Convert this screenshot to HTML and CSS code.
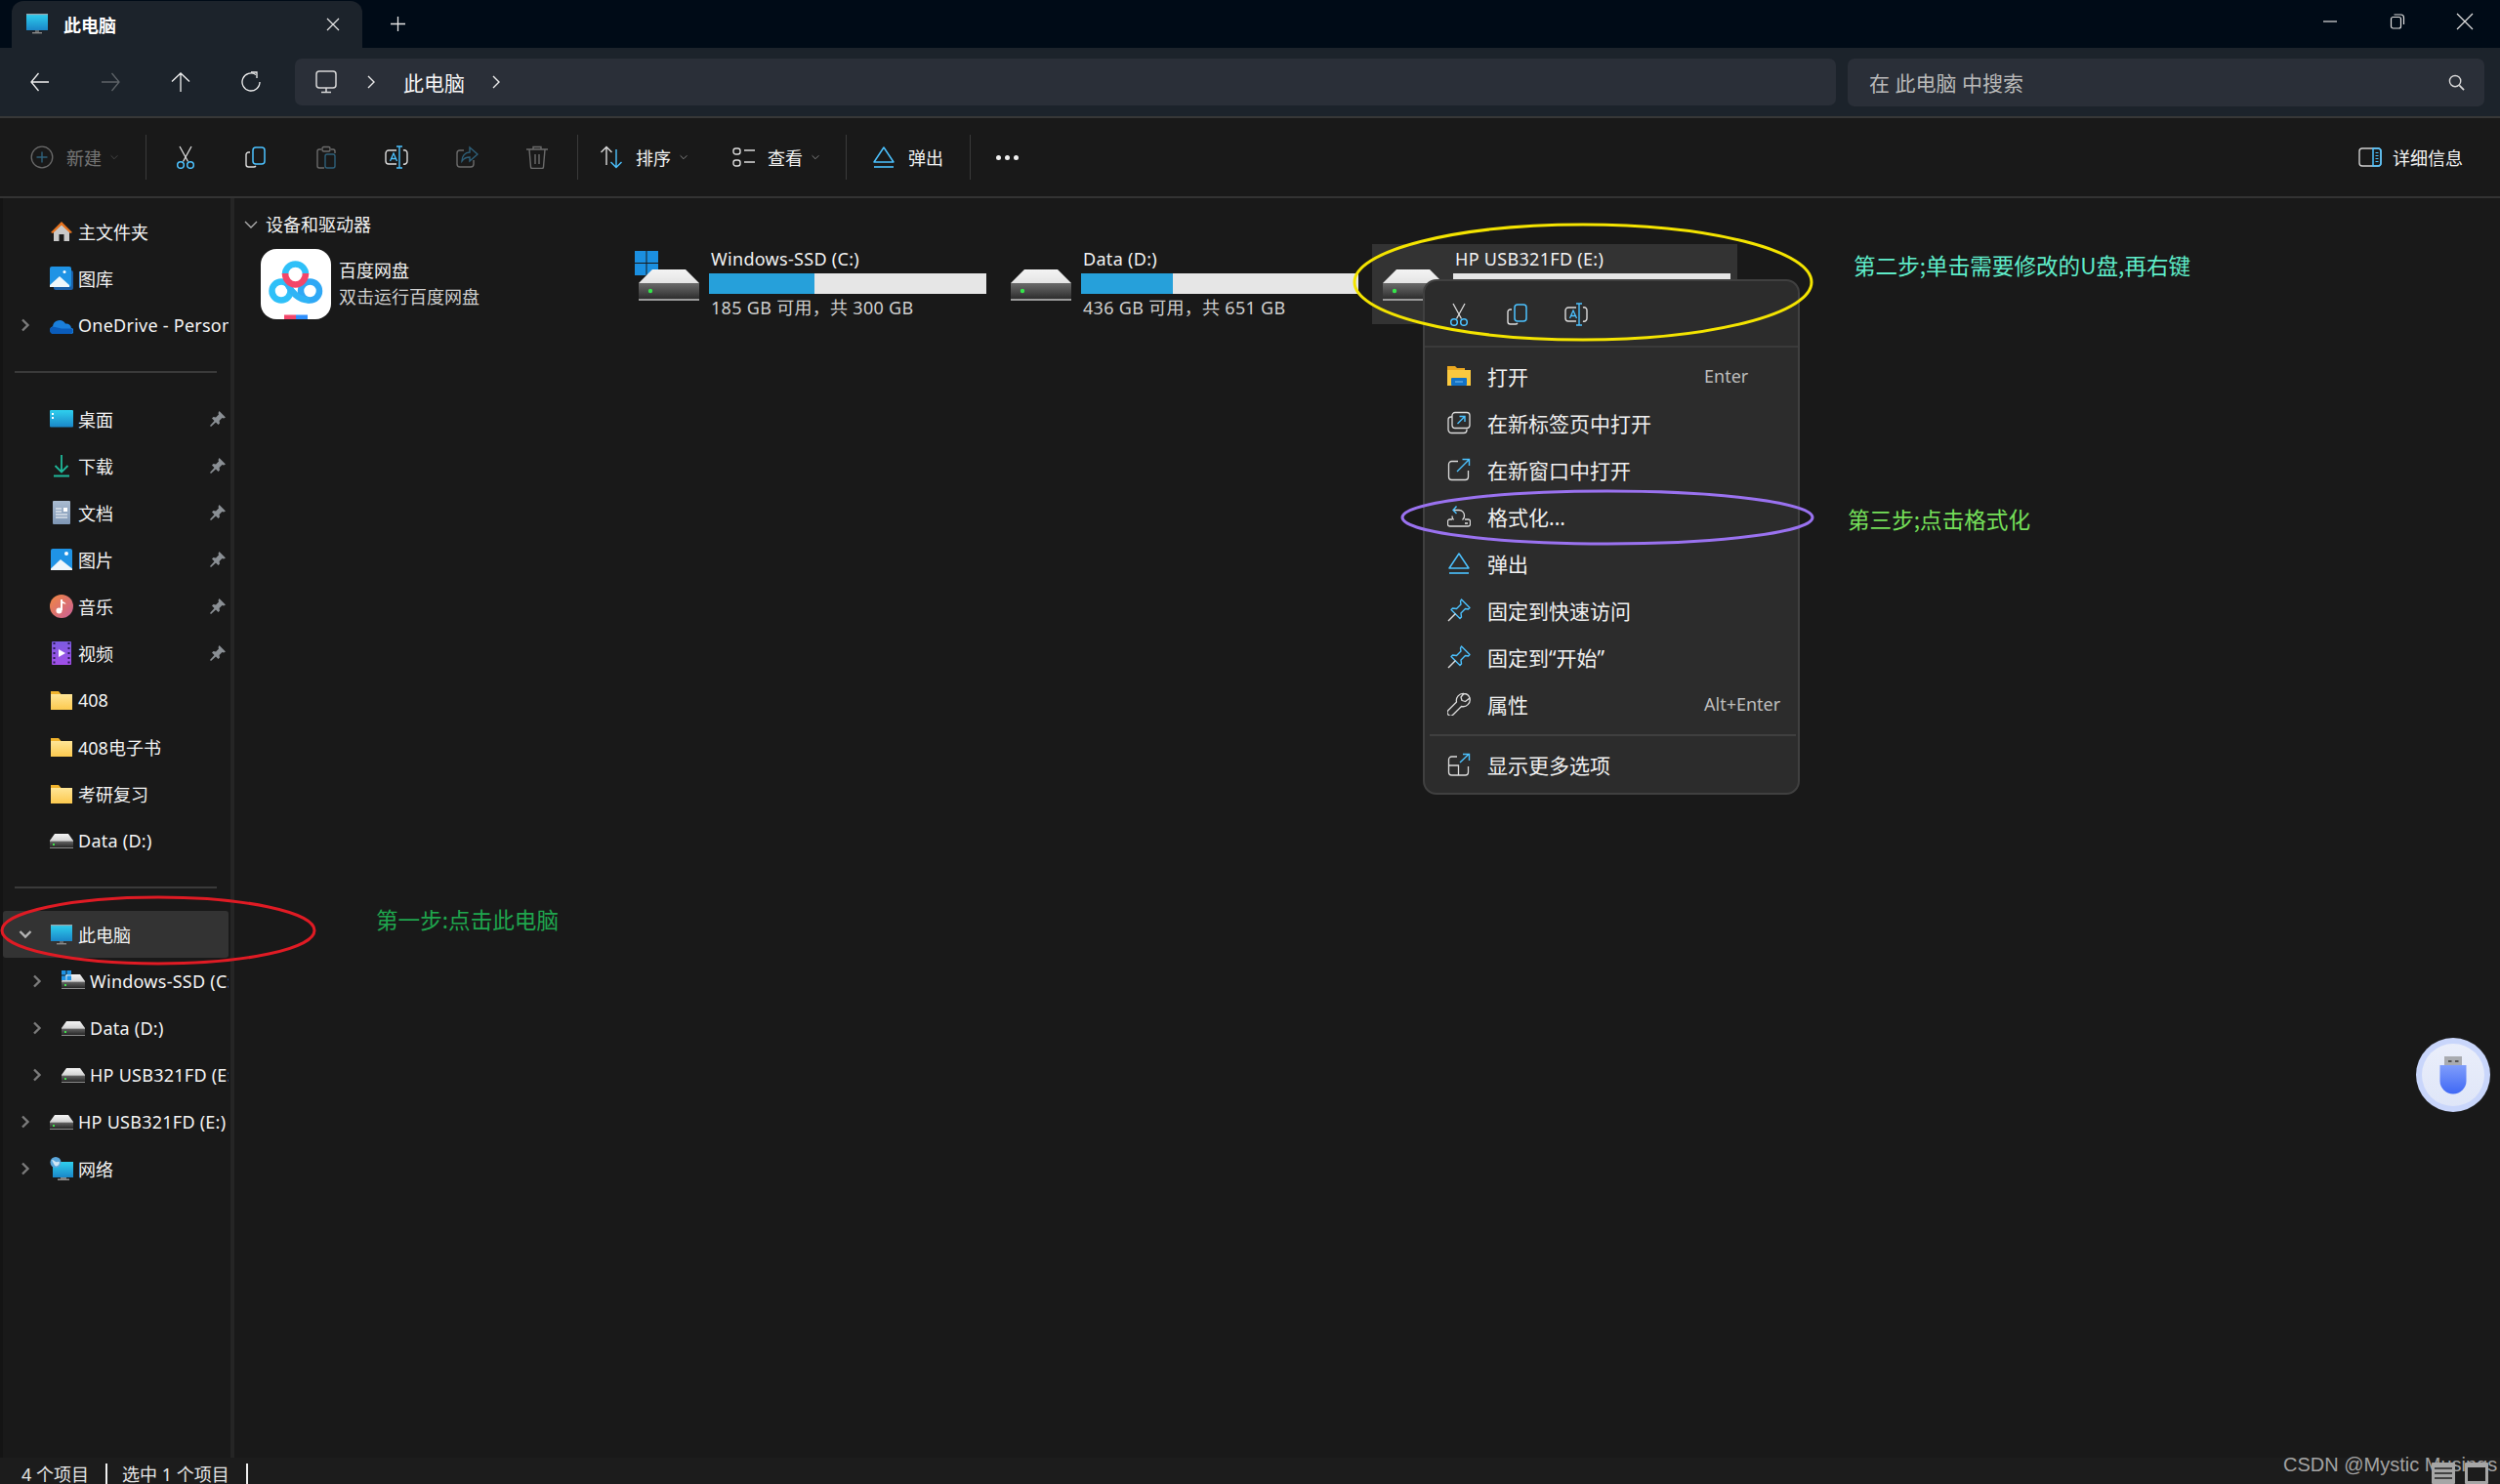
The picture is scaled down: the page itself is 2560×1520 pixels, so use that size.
FILE: index.html
```html
<!DOCTYPE html>
<html lang="zh-CN">
<head>
<meta charset="utf-8">
<title>此电脑</title>
<link rel="stylesheet" href="styles.css">
</head>
<body>
<svg class="defs" width="0" height="0" aria-hidden="true">
  <defs>
    <linearGradient id="gCyan" x1="0" y1="0" x2="0" y2="1"><stop offset="0" stop-color="#2fd0ee"/><stop offset="1" stop-color="#1a86c8"/></linearGradient>
    <linearGradient id="gFolder" x1="0" y1="0" x2="0" y2="1"><stop offset="0" stop-color="#ffe9a0"/><stop offset="1" stop-color="#fcc94e"/></linearGradient>
    <linearGradient id="gDrive" x1="0" y1="0" x2="0" y2="1"><stop offset="0" stop-color="#6b6b6b"/><stop offset="1" stop-color="#262626"/></linearGradient>
    <linearGradient id="gTop" x1="0" y1="0" x2="0" y2="1"><stop offset="0" stop-color="#f4f4f4"/><stop offset="1" stop-color="#d0d0d0"/></linearGradient>
    <linearGradient id="gPurple" x1="0" y1="0" x2="0" y2="1"><stop offset="0" stop-color="#7b5be0"/><stop offset="1" stop-color="#a24fe8"/></linearGradient>
    <linearGradient id="gMusic" x1="0" y1="0" x2="1" y2="1"><stop offset="0" stop-color="#f2873f"/><stop offset="1" stop-color="#c9609a"/></linearGradient>
    <linearGradient id="gDoc" x1="0" y1="0" x2="0" y2="1"><stop offset="0" stop-color="#a9bbd0"/><stop offset="1" stop-color="#7f97b5"/></linearGradient>
    <linearGradient id="gUsb" x1="0" y1="0" x2="0" y2="1"><stop offset="0" stop-color="#7f9dfb"/><stop offset="1" stop-color="#3f68f5"/></linearGradient>
    <linearGradient id="gUsbBg" x1="0" y1="0" x2="0" y2="1"><stop offset="0" stop-color="#eaeefa"/><stop offset="1" stop-color="#dfe6f8"/></linearGradient>

    <symbol id="i-pc" viewBox="0 0 24 24"><rect x="1" y="2" width="22" height="17" fill="url(#gCyan)"/><rect x="1" y="2" width="22" height="1.2" fill="#9aa7ad"/><rect x="10" y="19" width="4" height="2" fill="#666"/><rect x="7" y="21" width="10" height="1.4" fill="#8a8a8a"/></symbol>
    <symbol id="i-home" viewBox="0 0 24 24"><path d="M4 12 12 5l8 7v10h-5.500v-7h-5v7H4z" fill="#c9c9c9"/><path d="M1 13 12 2l11 11-2 1L12 5.500 3 14z" fill="#e8741f"/></symbol>
    <symbol id="i-gallery" viewBox="0 0 24 24"><rect x="4" y="4" width="20" height="20" rx="2" fill="#1b5fa8"/><rect x="0" y="0" width="22" height="21" rx="2" fill="#1f93e5"/><path d="M0 19 10 10l10 9v2H0z" fill="#eef6fb"/><circle cx="15" cy="5.500" r="1.500" fill="#fff"/></symbol>
    <symbol id="i-cloud" viewBox="0 0 24 24"><path d="M4 21a4 4 0 0 1-1-7.800 7 7 0 0 1 13-2.700 5 5 0 0 1 6 4.500 3 3 0 0 1-1 6z" fill="#1a7fdc"/><path d="M4 21a3.800 3.800 0 0 1-1-7.500l9 2 10 0a3 3 0 0 1-1 5.500z" fill="#0a5cbb"/></symbol>
    <symbol id="i-desktop" viewBox="0 0 24 24"><rect x="0" y="3" width="24" height="17.500" rx="1" fill="url(#gCyan)"/><rect x="2" y="6" width="2" height="2" fill="#fff"/><rect x="2" y="10" width="2" height="2" fill="#fff"/></symbol>
    <symbol id="i-down" viewBox="0 0 24 24"><path d="M12 1v17M5.500 12 12 18.500 18.500 12" fill="none" stroke="#1fb89a" stroke-width="1.800"/><path d="M4 22.500h16" stroke="#1fb89a" stroke-width="2"/></symbol>
    <symbol id="i-doc" viewBox="0 0 24 24"><rect x="3" y="0" width="18" height="24" rx="1" fill="url(#gDoc)"/><path d="M6 8h6M6 11h6M6 14h12M6 17h12" stroke="#fff" stroke-width="1"/><rect x="14" y="7" width="4" height="4" fill="#fff"/></symbol>
    <symbol id="i-pic" viewBox="0 0 24 24"><rect x="1" y="1" width="22" height="22" rx="2" fill="#1f93e5"/><path d="M1 21.500 11 12l12 9.500V23H1z" fill="#eef6fb"/><circle cx="17" cy="6" r="2" fill="#fff"/></symbol>
    <symbol id="i-music" viewBox="0 0 24 24"><circle cx="12" cy="12" r="12" fill="url(#gMusic)"/><path d="M12 5v11" stroke="#fff" stroke-width="2"/><circle cx="9.500" cy="16.500" r="3" fill="#fff"/><path d="M12 5c1 3 4 2.500 4.500 5-1.500-1-3-1-4.500-1z" fill="#fff"/></symbol>
    <symbol id="i-video" viewBox="0 0 24 24"><rect x="2" y="0" width="20" height="24" rx="1" fill="url(#gPurple)"/><path d="M9 8l7 4-7 4z" fill="#fff"/><path d="M3.500 2h2M3.500 7h2M3.500 12h2M3.500 17h2M3.500 21.500h2M18.500 2h2M18.500 7h2M18.500 12h2M18.500 17h2M18.500 21.500h2" stroke="#2a1a55" stroke-width="2"/></symbol>
    <symbol id="i-folder" viewBox="0 0 24 24"><path d="M1 4h8l2 2h12v16H1z" fill="url(#gFolder)"/><path d="M1 3h8l2.500 3H1z" fill="#f1b32c"/></symbol>
    <symbol id="i-drive" viewBox="0 0 24 24"><path d="M5 5h14l5 7v1H0v-1z" fill="url(#gTop)"/><rect x="0" y="12" width="24" height="7" fill="url(#gDrive)"/><rect x="0" y="12" width="24" height="1" fill="#aaa"/><rect x="0" y="19" width="24" height="1" fill="#8a8a8a"/><rect x="3" y="15" width="2" height="2" fill="#3fe04a"/></symbol>
    <symbol id="i-net" viewBox="0 0 24 24"><rect x="3" y="5" width="21" height="16" fill="url(#gCyan)"/><rect x="11" y="21" width="6" height="1.500" fill="#888"/><rect x="8" y="22.500" width="12" height="1.300" fill="#aaa"/><circle cx="6" cy="5.500" r="5.500" fill="#5ba7dc"/><path d="M2 3c3 0 3 3 6 2s2 3 0 4-3 0-4-2" fill="#cfe6f5"/></symbol>
    <symbol id="i-pin" viewBox="0 0 16 16"><path d="M9.500 0 16 6.500l-2 1-1.500-.5-3 3 .5 2.500-1.500 1.500-2.500-2.500L1 16l-1-1 4.500-5L2 7.500 3.500 6 6 6.500l3-3-.5-1.500z" fill="#8a8f94"/></symbol>
    <symbol id="i-chev" viewBox="0 0 10 14"><path d="M2 1.500 7.500 7 2 12.500" fill="none" stroke="#7b7b7b" stroke-width="2.400"/></symbol>
    <symbol id="i-chevd" viewBox="0 0 14 10"><path d="M1.500 2 7 7.500 12.500 2" fill="none" stroke="#b5b5b5" stroke-width="2.400"/></symbol>
    <symbol id="i-thin-d" viewBox="0 0 14 10"><path d="M1 2 7 8 13 2" fill="none" stroke="#b0b0b0" stroke-width="1.200"/></symbol>

    <symbol id="t-cut" viewBox="0 0 24 24"><path d="M6 1l8.500 15.500M18 1 9.500 16.500" fill="none" stroke="#dcdcdc" stroke-width="1.300"/><circle cx="7" cy="20" r="3.300" fill="none" stroke="#4cc2ff" stroke-width="1.500"/><circle cx="17" cy="20" r="3.300" fill="none" stroke="#4cc2ff" stroke-width="1.500"/></symbol>
    <symbol id="t-copy" viewBox="0 0 24 24"><path d="M6 7H4.500A2.500 2.500 0 0 0 2 9.500v10A2.500 2.500 0 0 0 4.500 22H10a2.500 2.500 0 0 0 2-1" fill="none" stroke="#dcdcdc" stroke-width="1.400"/><rect x="9" y="2" width="12" height="17" rx="3" fill="none" stroke="#4cc2ff" stroke-width="1.500"/></symbol>
    <symbol id="t-paste" viewBox="0 0 24 24"><path d="M7 4H5a2 2 0 0 0-2 2v15a2 2 0 0 0 2 2h5M17 4h2a2 2 0 0 1 2 2v2" fill="none" stroke="#dcdcdc" stroke-width="1.400"/><rect x="8" y="1.500" width="8" height="4.500" rx="1.500" fill="none" stroke="#dcdcdc" stroke-width="1.400"/><rect x="11" y="9" width="10" height="14" rx="2" fill="none" stroke="#4cc2ff" stroke-width="1.400"/></symbol>
    <symbol id="t-ren" viewBox="0 0 24 24"><path d="M12 5H4a3 3 0 0 0-3 3v8a3 3 0 0 0 3 3h8M19 5a3 3 0 0 1 4 3v8a3 3 0 0 1-4 3" fill="none" stroke="#dcdcdc" stroke-width="1.400"/><path d="M12 1h6M15 1v22M12 23h6" fill="none" stroke="#4cc2ff" stroke-width="1.400"/><path d="M5.500 16 9 8l3.500 8M6.800 13.500h4.500" fill="none" stroke="#4cc2ff" stroke-width="1.300"/></symbol>
    <symbol id="t-share" viewBox="0 0 24 24"><path d="M9 5H5a3 3 0 0 0-3 3v11a3 3 0 0 0 3 3h11a3 3 0 0 0 3-3v-4" fill="none" stroke="#dcdcdc" stroke-width="1.400"/><path d="M15 2l8 7-8 7v-4c-4 0-6 1-8 4 0-5 3-9 8-9z" fill="none" stroke="#4cc2ff" stroke-width="1.400"/></symbol>
    <symbol id="t-del" viewBox="0 0 24 24"><path d="M1 4h22M8 4V1.500h8V4M4 4l1.500 18a1.500 1.500 0 0 0 1.500 1.500h10a1.500 1.500 0 0 0 1.500-1.500L20 4" fill="none" stroke="#dcdcdc" stroke-width="1.400"/><path d="M10 9v10M14 9v10" stroke="#dcdcdc" stroke-width="1.400"/></symbol>
    <symbol id="t-new" viewBox="0 0 24 24"><circle cx="12" cy="12" r="10.800" fill="none" stroke="#dcdcdc" stroke-width="1.300"/><path d="M12 6.500v11M6.500 12h11" stroke="#4cc2ff" stroke-width="1.400"/></symbol>
    <symbol id="t-sort" viewBox="0 0 24 24"><path d="M1.500 7 7 1.500 12.500 7M7 1.500V20" fill="none" stroke="#dcdcdc" stroke-width="1.400"/><path d="M11.500 17 17 22.500 22.500 17M17 4v18" fill="none" stroke="#4cc2ff" stroke-width="1.400"/></symbol>
    <symbol id="t-view" viewBox="0 0 24 24"><rect x="1" y="3" width="7" height="6" rx="2.500" fill="none" stroke="#dcdcdc" stroke-width="1.400"/><rect x="1" y="15" width="7" height="6" rx="2.500" fill="none" stroke="#dcdcdc" stroke-width="1.400"/><path d="M12 5h11M12 17h11" stroke="#dcdcdc" stroke-width="1.400"/></symbol>
    <symbol id="t-eject" viewBox="0 0 24 24"><path d="M12 2 22 17H2z" fill="none" stroke="#4cc2ff" stroke-width="1.500" stroke-linejoin="round"/><path d="M2 22h20" stroke="#4cc2ff" stroke-width="1.600"/></symbol>
    <symbol id="t-detail" viewBox="0 0 24 24"><rect x="1" y="3" width="22" height="18" rx="3" fill="none" stroke="#cfcfcf" stroke-width="1.400"/><path d="M15 3h5a3 3 0 0 1 3 3v12a3 3 0 0 1-3 3h-5z" fill="none" stroke="#4cc2ff" stroke-width="1.500"/><path d="M17.500 7.500h3M17.500 10.500h3M17.500 13.500h3M17.500 16.500h3" stroke="#4cc2ff" stroke-width="1.200"/></symbol>

    <symbol id="m-open" viewBox="0 0 24 24"><path d="M0 2h8l2 2h8v18H0z" fill="#eba820"/><rect x="0" y="6" width="24" height="16" fill="#fbc93f"/><rect x="4" y="14" width="16" height="8" rx="1" fill="#1473c6"/><path d="M8 18h8" stroke="#7fc4f5" stroke-width="1"/></symbol>
    <symbol id="m-tab" viewBox="0 0 24 24"><rect x="5" y="1.500" width="18" height="16" rx="3" fill="none" stroke="#dcdcdc" stroke-width="1.300"/><path d="M5 6H4a3 3 0 0 0-3 3v10a3.500 3.500 0 0 0 3.500 3.500H17a3 3 0 0 0 3-3v-1" fill="none" stroke="#dcdcdc" stroke-width="1.300"/><path d="M10.500 13 18 5.500M12.500 5.500H18V11" fill="none" stroke="#4cc2ff" stroke-width="1.400"/></symbol>
    <symbol id="m-win" viewBox="0 0 24 24"><path d="M11 3.500H4.500A3 3 0 0 0 1.500 6.500v13a3 3 0 0 0 3 3h14a3 3 0 0 0 3-3V13" fill="none" stroke="#dcdcdc" stroke-width="1.300"/><path d="M10 14 22 2M15.500 1.500H22.500V8" fill="none" stroke="#4cc2ff" stroke-width="1.400"/></symbol>
    <symbol id="m-format" viewBox="0 0 24 24"><path d="M5 15H2.500a2 2 0 0 0-2 2v3a2 2 0 0 0 2 2h19a2 2 0 0 0 2-2v-3a2 2 0 0 0-2-2H18" fill="none" stroke="#dcdcdc" stroke-width="1.300"/><path d="M18 19h3" stroke="#dcdcdc" stroke-width="1.600"/><path d="M7 5.500h5a5.500 5.500 0 0 1 5.500 5.500 5 5 0 0 1-2 4.500" fill="none" stroke="#dcdcdc" stroke-width="1.300"/><path d="M6.500 15.500a5.500 5.500 0 0 1-1.500-4" fill="none" stroke="#dcdcdc" stroke-width="1.300"/><path d="M9.500 1.500 6 5.500 9.500 9" fill="none" stroke="#4cc2ff" stroke-width="1.400"/></symbol>
    <symbol id="m-pin" viewBox="0 0 24 24"><path d="M14.500 1 23 9.500l-1.500 1.500-3-.5-4.500 4.500.5 4-1.500 1.500L4 11.500 5.500 10l4 .5L14 6l-.5-3z" fill="none" stroke="#4cc2ff" stroke-width="1.400" stroke-linejoin="round"/><path d="M8.500 15.500 1 23" stroke="#dcdcdc" stroke-width="1.400"/></symbol>
    <symbol id="m-wrench" viewBox="0 0 24 24"><path d="M17 1.500a6.500 6.500 0 0 1 6 4.500l-4.500 3.500-3.500-1-1-3.500zM23 6a7 7 0 0 1-8.500 8.500L6 23a3.200 3.200 0 0 1-5-4.500L9.500 10A7 7 0 0 1 17 1.500" fill="none" stroke="#dcdcdc" stroke-width="1.300" stroke-linejoin="round"/></symbol>
    <symbol id="m-more" viewBox="0 0 24 24"><path d="M10 4H4.500a3 3 0 0 0-3 3v13a3 3 0 0 0 3 3h14a3 3 0 0 0 3-3V14" fill="none" stroke="#dcdcdc" stroke-width="1.300"/><path d="M1.500 13h10v10" fill="none" stroke="#dcdcdc" stroke-width="1.300"/><path d="M13 10 22 1.500M16 1.500h6.500V8" fill="none" stroke="#4cc2ff" stroke-width="1.400"/></symbol>
  </defs>
</svg>

<div class="window">
  <header class="titlebar">
    <div class="tab">
      <svg class="ico-22"><use href="#i-pc"/></svg>
      <span class="tab-title">此电脑</span>
      <svg class="tab-close" viewBox="0 0 14 14"><path d="M1 1l12 12M13 1 1 13" stroke="#e6e6e6" stroke-width="1.200"/></svg>
    </div>
    <svg class="tab-plus" viewBox="0 0 14 14"><path d="M7 0v14M0 7h14" stroke="#e6e6e6" stroke-width="1.200"/></svg>
    <div class="winctl">
      <svg class="ctl" viewBox="0 0 16 16"><path d="M1 8h14" stroke="#e0e0e0" stroke-width="1.200"/></svg>
      <svg class="ctl" viewBox="0 0 16 16"><rect x="1.500" y="3.500" width="10" height="11.500" rx="2" fill="none" stroke="#e0e0e0" stroke-width="1.200"/><path d="M4.500 1h7a3 3 0 0 1 3 3v7" fill="none" stroke="#e0e0e0" stroke-width="1.200"/></svg>
      <svg class="ctl" viewBox="0 0 16 16"><path d="M0 0l16 16M16 0 0 16" stroke="#e0e0e0" stroke-width="1.200"/></svg>
    </div>
  </header>

  <nav class="navbar">
    <div class="navbtns">
      <svg class="nav-ico" viewBox="0 0 24 24"><path d="M3 12h18M10.500 3 3 12l7.500 9" fill="none" stroke="#f0f0f0" stroke-width="1.300"/></svg>
      <svg class="nav-ico" viewBox="0 0 24 24"><path d="M21 12H3M13.500 3 21 12l-7.500 9" fill="none" stroke="#5e6368" stroke-width="1.300"/></svg>
      <svg class="nav-ico" viewBox="0 0 24 24"><path d="M12 22V3M3 11.500 12 3l9 8.500" fill="none" stroke="#f0f0f0" stroke-width="1.300"/></svg>
      <svg class="nav-ico" viewBox="0 0 24 24"><path d="M17 4.500a9 9 0 1 0 4 7.500" fill="none" stroke="#f0f0f0" stroke-width="1.300"/><path d="M12 2h6v6" fill="none" stroke="#f0f0f0" stroke-width="1.300"/></svg>
    </div>
    <div class="address">
      <svg class="addr-pc" viewBox="0 0 24 24"><rect x="2" y="1" width="20" height="17" rx="3" fill="none" stroke="#d8d8d8" stroke-width="1.500"/><path d="M12 18v4M7 22.500h10" stroke="#d8d8d8" stroke-width="1.500"/></svg>
      <svg class="addr-chev" viewBox="0 0 10 14"><path d="M2 1 8 7l-6 6" fill="none" stroke="#e8e8e8" stroke-width="1.400"/></svg>
      <span class="addr-text">此电脑</span>
      <svg class="addr-chev" viewBox="0 0 10 14"><path d="M2 1 8 7l-6 6" fill="none" stroke="#e8e8e8" stroke-width="1.400"/></svg>
    </div>
    <div class="search">
      <span class="search-text">在 此电脑 中搜索</span>
      <svg class="search-ico" viewBox="0 0 18 18"><circle cx="7.500" cy="7.500" r="6" fill="none" stroke="#d8d8d8" stroke-width="1.500"/><path d="M12 12l5 5" stroke="#d8d8d8" stroke-width="1.800"/></svg>
    </div>
  </nav>

  <div class="toolbar">
    <div class="tb-new dim"><svg class="tb-ico"><use href="#t-new"/></svg><span>新建</span><svg class="tb-cv"><use href="#i-thin-d"/></svg></div>
    <i class="tb-sep"></i>
    <div class="tb-actions">
      <svg class="tb-ico"><use href="#t-cut"/></svg>
      <svg class="tb-ico"><use href="#t-copy"/></svg>
      <svg class="tb-ico dim"><use href="#t-paste"/></svg>
      <svg class="tb-ico"><use href="#t-ren"/></svg>
      <svg class="tb-ico dim"><use href="#t-share"/></svg>
      <svg class="tb-ico dim"><use href="#t-del"/></svg>
    </div>
    <i class="tb-sep"></i>
    <div class="tb-item sort"><svg class="tb-ico"><use href="#t-sort"/></svg><span>排序</span><svg class="tb-cv"><use href="#i-thin-d"/></svg></div>
    <div class="tb-item view"><svg class="tb-ico"><use href="#t-view"/></svg><span>查看</span><svg class="tb-cv"><use href="#i-thin-d"/></svg></div>
    <i class="tb-sep"></i>
    <div class="tb-item eject"><svg class="tb-ico"><use href="#t-eject"/></svg><span>弹出</span></div>
    <i class="tb-sep"></i>
    <div class="tb-more"><b></b><b></b><b></b></div>
    <div class="tb-detail"><svg class="tb-ico"><use href="#t-detail"/></svg><span>详细信息</span></div>
  </div>

  <div class="main">
    <aside class="sidebar">
      <div class="row"><i class="cv"></i><svg class="ico"><use href="#i-home"/></svg><span class="lbl">主文件夹</span></div>
      <div class="row"><i class="cv"></i><svg class="ico"><use href="#i-gallery"/></svg><span class="lbl">图库</span></div>
      <div class="row"><i class="cv"><svg class="cv-ico"><use href="#i-chev"/></svg></i><svg class="ico"><use href="#i-cloud"/></svg><span class="lbl lat">OneDrive - Personal</span></div>
      <div class="side-div"></div>
      <div class="row"><i class="cv"></i><svg class="ico"><use href="#i-desktop"/></svg><span class="lbl">桌面</span><svg class="pin"><use href="#i-pin"/></svg></div>
      <div class="row"><i class="cv"></i><svg class="ico"><use href="#i-down"/></svg><span class="lbl">下载</span><svg class="pin"><use href="#i-pin"/></svg></div>
      <div class="row"><i class="cv"></i><svg class="ico"><use href="#i-doc"/></svg><span class="lbl">文档</span><svg class="pin"><use href="#i-pin"/></svg></div>
      <div class="row"><i class="cv"></i><svg class="ico"><use href="#i-pic"/></svg><span class="lbl">图片</span><svg class="pin"><use href="#i-pin"/></svg></div>
      <div class="row"><i class="cv"></i><svg class="ico"><use href="#i-music"/></svg><span class="lbl">音乐</span><svg class="pin"><use href="#i-pin"/></svg></div>
      <div class="row"><i class="cv"></i><svg class="ico"><use href="#i-video"/></svg><span class="lbl">视频</span><svg class="pin"><use href="#i-pin"/></svg></div>
      <div class="row"><i class="cv"></i><svg class="ico"><use href="#i-folder"/></svg><span class="lbl">408</span></div>
      <div class="row"><i class="cv"></i><svg class="ico"><use href="#i-folder"/></svg><span class="lbl">408电子书</span></div>
      <div class="row"><i class="cv"></i><svg class="ico"><use href="#i-folder"/></svg><span class="lbl">考研复习</span></div>
      <div class="row"><i class="cv"></i><svg class="ico"><use href="#i-drive"/></svg><span class="lbl lat">Data (D:)</span></div>
      <div class="side-div"></div>
      <div class="row selected"><i class="cv"><svg class="cv-ico-d"><use href="#i-chevd"/></svg></i><svg class="ico"><use href="#i-pc"/></svg><span class="lbl">此电脑</span></div>
      <div class="row sub"><i class="cv"><svg class="cv-ico"><use href="#i-chev"/></svg></i><span class="ico-wrap"><svg class="ico"><use href="#i-drive"/></svg><svg class="mini-win" viewBox="0 0 10 10"><path d="M0 0h4.500v4.500H0zM5.500 0H10v4.500H5.500zM0 5.500h4.500V10H0zM5.500 5.500H10V10H5.500z" fill="#1f93e5"/></svg></span><span class="lbl lat">Windows-SSD (C:)</span></div>
      <div class="row sub"><i class="cv"><svg class="cv-ico"><use href="#i-chev"/></svg></i><svg class="ico"><use href="#i-drive"/></svg><span class="lbl lat">Data (D:)</span></div>
      <div class="row sub"><i class="cv"><svg class="cv-ico"><use href="#i-chev"/></svg></i><svg class="ico"><use href="#i-drive"/></svg><span class="lbl lat">HP USB321FD (E:)</span></div>
      <div class="row"><i class="cv"><svg class="cv-ico"><use href="#i-chev"/></svg></i><svg class="ico"><use href="#i-drive"/></svg><span class="lbl lat">HP USB321FD (E:)</span></div>
      <div class="row"><i class="cv"><svg class="cv-ico"><use href="#i-chev"/></svg></i><svg class="ico"><use href="#i-net"/></svg><span class="lbl">网络</span></div>
    </aside>

    <section class="content">
      <div class="group-head"><svg class="group-cv" viewBox="0 0 14 10"><path d="M1 2 7 8l6-6" fill="none" stroke="#b0b0b0" stroke-width="1.300"/></svg><span>设备和驱动器</span></div>
      <div class="tiles">
        <div class="tile app">
          <svg class="baidu" viewBox="0 0 72 72">
            <rect width="72" height="72" rx="16" fill="#fff"/>
            <rect x="24" y="67.500" width="12" height="4.500" fill="#f2466a"/><rect x="36" y="67.500" width="12" height="4.500" fill="#2f8ffb"/>
            <circle cx="21" cy="43" r="9.500" fill="none" stroke="#2fc0f8" stroke-width="6.500"/>
            <circle cx="50.500" cy="43" r="9.500" fill="none" stroke="#2fa8f5" stroke-width="6.500"/>
            <path d="M27 35c4 9 12 18 23 17.500" fill="none" stroke="#2fb4f6" stroke-width="6.500"/>
            <path d="M25 26a10.500 10.500 0 0 1 21 0" fill="none" stroke="#2fc0f8" stroke-width="6.500"/>
            <path d="M25 25a10.500 11.500 0 0 0 21 0" fill="none" stroke="#f2466a" stroke-width="6.500"/>
          </svg>
          <div class="app-text"><div class="app-name">百度网盘</div><div class="app-sub">双击运行百度网盘</div></div>
        </div>
        <div class="tile drive">
          <svg class="drive-ico" viewBox="0 0 62 82"><path d="M-4 7H7.500v12H-4zM8.500 7H20v12H8.500zM-4 20H7.500v12H-4zM8.500 20H20v12H8.500z" fill="#1b8fe0"/><path d="M14 26h34l14 14v18H0V40z" fill="url(#gTop)"/><rect y="40" width="62" height="18" fill="url(#gDrive)"/><rect y="56" width="62" height="2" fill="#9a9a9a"/><circle cx="12" cy="48" r="2.200" fill="#35e64a"/></svg>
          <div class="info"><div class="d-name">Windows-SSD (C:)</div><div class="bar"><div class="fill fill-c"></div></div><div class="d-sub">185 GB 可用，共 300 GB</div></div>
        </div>
        <div class="tile drive">
          <svg class="drive-ico" viewBox="0 0 62 82"><path d="M14 26h34l14 14v18H0V40z" fill="url(#gTop)"/><rect y="40" width="62" height="18" fill="url(#gDrive)"/><rect y="56" width="62" height="2" fill="#9a9a9a"/><circle cx="12" cy="48" r="2.200" fill="#35e64a"/></svg>
          <div class="info"><div class="d-name">Data (D:)</div><div class="bar"><div class="fill fill-d"></div></div><div class="d-sub">436 GB 可用，共 651 GB</div></div>
        </div>
        <div class="tile drive active">
          <svg class="drive-ico" viewBox="0 0 62 82"><path d="M14 26h34l14 14v18H0V40z" fill="url(#gTop)"/><rect y="40" width="62" height="18" fill="url(#gDrive)"/><rect y="56" width="62" height="2" fill="#9a9a9a"/><circle cx="12" cy="48" r="2.200" fill="#35e64a"/></svg>
          <div class="info"><div class="d-name">HP USB321FD (E:)</div><div class="bar"></div></div>
        </div>
      </div>
    </section>
  </div>

  <footer class="statusbar"><span>4 个项目</span><i></i><span>选中 1 个项目</span><i></i></footer>

  <div class="ctxmenu">
    <div class="ctx-top">
      <svg class="m-ico"><use href="#t-cut"/></svg>
      <svg class="m-ico"><use href="#t-copy"/></svg>
      <svg class="m-ico"><use href="#t-ren"/></svg>
    </div>
    <div class="ctx-list">
      <div class="m-row"><svg class="m-ico"><use href="#m-open"/></svg><span class="m-t">打开</span><span class="m-k">Enter</span></div>
      <div class="m-row"><svg class="m-ico"><use href="#m-tab"/></svg><span class="m-t">在新标签页中打开</span></div>
      <div class="m-row"><svg class="m-ico"><use href="#m-win"/></svg><span class="m-t">在新窗口中打开</span></div>
      <div class="m-row"><svg class="m-ico"><use href="#m-format"/></svg><span class="m-t">格式化...</span></div>
      <div class="m-row"><svg class="m-ico"><use href="#t-eject"/></svg><span class="m-t">弹出</span></div>
      <div class="m-row"><svg class="m-ico"><use href="#m-pin"/></svg><span class="m-t">固定到快速访问</span></div>
      <div class="m-row"><svg class="m-ico"><use href="#m-pin"/></svg><span class="m-t">固定到“开始”</span></div>
      <div class="m-row"><svg class="m-ico"><use href="#m-wrench"/></svg><span class="m-t">属性</span><span class="m-k">Alt+Enter</span></div>
      <div class="m-sep"></div>
      <div class="m-row"><svg class="m-ico"><use href="#m-more"/></svg><span class="m-t">显示更多选项</span></div>
    </div>
  </div>

  <svg class="ring ring-red" viewBox="0 0 324 72"><ellipse cx="162" cy="36" rx="160" ry="34"/></svg>
  <svg class="ring ring-yellow" viewBox="0 0 472 122"><ellipse cx="236" cy="61" rx="234" ry="59"/></svg>
  <svg class="ring ring-purple" viewBox="0 0 424 58"><ellipse cx="212" cy="29" rx="210" ry="27"/></svg>
  <div class="note note1">第一步:点击此电脑</div>
  <div class="note note2">第二步;单击需要修改的U盘,再右键</div>
  <div class="note note3">第三步;点击格式化</div>

  <svg class="usb" viewBox="0 0 76 76">
    <circle cx="38" cy="38" r="38" fill="#c9d6fb"/>
    <circle cx="38" cy="38" r="32" fill="url(#gUsbBg)"/>
    <rect x="29" y="19" width="18" height="10" fill="#a9abb0"/>
    <rect x="33" y="23" width="3.500" height="2" fill="#555"/><rect x="40" y="23" width="3.500" height="2" fill="#555"/>
    <path d="M24.500 28h27v16a13.500 13.500 0 0 1-27 0z" fill="url(#gUsb)"/>
  </svg>

  <div class="watermark">CSDN @Mystic Musings</div>
  <div class="corner-icons">
    <svg viewBox="0 0 24 22"><rect width="24" height="22" rx="1" fill="#a6a6a6"/><path d="M3 6h18M3 11h18M3 16h18" stroke="#222" stroke-width="1.500"/></svg>
    <svg viewBox="0 0 24 22"><rect width="24" height="22" rx="1" fill="#a6a6a6"/><rect x="3" y="5" width="18" height="14" fill="#1c1c1c"/></svg>
  </div>
</div>
</body>
</html>
```

FILE: styles.css
```css
* { box-sizing: border-box; }
html, body { margin: 0; padding: 0; background: #191919; }
body { font-family: "Noto Sans", "Noto Sans CJK SC", sans-serif; color: #f2f2f2; font-size: 18px; overflow: hidden; }
.defs { position: absolute; }
i { font-style: normal; }
svg { display: block; flex: none; overflow: visible; }

.window { position: relative; width: 2560px; height: 1520px; display: flex; flex-direction: column; overflow: hidden; }

/* title bar */
.titlebar { height: 49px; background: #000b17; display: flex; align-items: flex-end; padding-left: 12px; flex: none; }
.tab { width: 359px; height: 48px; background: #1c232b; border-radius: 12px 12px 0 0; display: flex; align-items: center; padding-left: 14px; }
.ico-22 { width: 24px; height: 24px; margin-top: -2px; }
.tab-title { margin-left: 15px; font-weight: 700; font-size: 18px; color: #fff; flex: 1; }
.tab-close { width: 14px; height: 14px; margin-right: 23px; }
.tab-plus { width: 15px; height: 15px; margin: 0 0 17px 29px; }
.winctl { margin-left: auto; display: flex; gap: 53px; padding: 0 28px 19px 0; align-self: flex-end; align-items: center; }
.ctl { width: 16px; height: 16px; }

/* nav */
.navbar { height: 72px; background: #1c232b; border-bottom: 2px solid #373737; display: flex; align-items: center; padding: 0 16px 0 0; flex: none; }
.navbtns { width: 302px; display: flex; gap: 48px; padding-left: 29px; flex: none; }
.nav-ico { width: 24px; height: 24px; }
.address { flex: 1; height: 48px; background: #2a2f38; border-radius: 7px; display: flex; align-items: center; padding-left: 20px; }
.addr-pc { width: 24px; height: 24px; }
.addr-chev { width: 10px; height: 14px; margin-left: 29px; }
.addr-text { margin-left: 28px; margin-right: 6px; font-size: 21px; color: #f5f5f5; }
.addr-text + .addr-chev { margin-left: 21px; }
.search { width: 652px; height: 49px; margin-left: 12px; background: #2a2f38; border-radius: 7px; display: flex; align-items: center; padding: 0 20px 0 22px; justify-content: space-between; }
.search-text { font-size: 21px; color: #b9b9b9; }
.search-ico { width: 17px; height: 17px; }

/* toolbar */
.toolbar { height: 82px; background: #191919; border-bottom: 2px solid #333; display: flex; align-items: center; flex: none; font-size: 18px; padding-left: 31px; }
.tb-ico { width: 24px; height: 24px; }
.tb-cv { width: 8px; height: 6px; margin-left: 9px; }
.dim { opacity: .42; }
.tb-new { display: flex; align-items: center; width: 118px; }
.tb-new span { margin-left: 13px; }
.tb-new .tb-cv { margin-left: 9px; }
.tb-sep { width: 1px; height: 46px; background: #3a3a3a; flex: none; }
.tb-actions { display: flex; gap: 48px; padding: 0 29px 0 28px; }
.tb-item { display: flex; align-items: center; }
.tb-item span { margin-left: 13px; }
.sort { margin-left: 22px; }
.view { margin-left: 46px; }
.view span { margin-left: 12px; }
.view + .tb-sep { margin-left: 27px; }
.eject { margin-left: 26px; }
.eject + .tb-sep { margin-left: 27px; }
.tb-more { display: flex; gap: 4px; margin-left: 26px; }
.tb-more b { width: 5px; height: 5px; border-radius: 50%; background: #f0f0f0; }
.tb-detail { margin-left: auto; margin-right: 38px; display: flex; align-items: center; }
.tb-detail span { margin-left: 11px; }

/* main */
.main { flex: 1; min-height: 0; display: flex; }
.sidebar { width: 240px; flex: none; border-left: 3px solid #141414; border-right: 4px solid #252525; padding: 10px 2px 0 0; overflow: hidden; background: #191919; }
.row { height: 48px; display: flex; align-items: center; white-space: nowrap; overflow: hidden; }
.row .cv { width: 48px; flex: none; display: flex; justify-content: flex-start; padding-left: 18px; }
.cv-ico { width: 10px; height: 14px; }
.cv-ico-d { width: 14px; height: 10px; margin-left: -2px; }
.ico { width: 24px; height: 24px; }
.lbl { margin-left: 5px; font-size: 18px; color: #f4f4f4; }
.lat { letter-spacing: .25px; }
.pin { width: 16px; height: 16px; margin-left: auto; margin-right: 3px; }
.row.selected { background: #333; border-radius: 3px; }
.row.sub .cv { width: 60px; padding-left: 30px; }
.ico-wrap { position: relative; display: block; width: 24px; height: 24px; }
.mini-win { position: absolute; left: 0; top: 1px; width: 10px; height: 10px; }
.side-div { height: 48px; display: flex; align-items: center; padding: 0 12px; }
.side-div::before { content: ""; display: block; width: 208px; height: 2px; background: #3a3a3a; }

.content { flex: 1; padding-left: 22px; min-width: 0; }
.group-head { display: flex; align-items: center; margin-left: -12px; padding: 14px 0 7px; line-height: 26px; font-size: 18px; }
.group-cv { width: 14px; height: 10px; margin-right: 8px; }
.tiles { display: flex; gap: 7px; }
.tile { width: 374px; height: 82px; display: flex; }
.tile.app { padding: 5px 0 0 5px; gap: 8px; }
.baidu { width: 72px; height: 72px; }
.app-text { padding-top: 9px; }
.app-name { line-height: 27px; color: #f2f2f2; }
.app-sub { line-height: 27px; color: #cfcfcf; }
.tile.drive { padding-left: 11px; gap: 10px; }
.tile.active { background: #333; }
.drive-ico { width: 62px; height: 82px; }
.info { width: 284px; padding-top: 2px; }
.d-name { line-height: 26px; padding-left: 2px; font-size: 18px; letter-spacing: .3px; }
.bar { height: 21px; margin-top: 2px; background: #e6e6e6; }
.fill { height: 100%; background: #26a0da; }
.fill-c { width: 38%; }
.fill-d { width: 33%; }
.d-sub { line-height: 28px; padding-left: 2px; color: #cfcfcf; font-size: 18px; letter-spacing: .3px; white-space: nowrap; }

/* status */
.statusbar { height: 27px; flex: none; background: #1c1c1c; display: flex; align-items: flex-start; padding: 4px 0 0 22px; font-size: 18px; line-height: 26px; color: #e6e6e6; }
.statusbar i { width: 2px; height: 22px; margin: 2px 15px 0 17px; background: #f0f0f0; }

/* context menu */
.ctxmenu { position: absolute; left: 1457px; top: 286px; width: 386px; height: 528px; background: #2c2c2c; border: 2px solid #404040; border-radius: 14px; }
.ctx-top { height: 68px; display: flex; gap: 36px; padding: 22px 0 0 23px; border-bottom: 2px solid #3a3a3a; }
.m-ico { width: 24px; height: 24px; }
.ctx-list { padding-top: 5px; }
.m-row { height: 48px; display: flex; align-items: center; padding-left: 23px; font-size: 21px; color: #f0f0f0; }
.m-t { margin-left: 17px; }
.m-k { margin-left: auto; margin-right: 21px; width: 75px; font-size: 18px; color: #bdbdbd; white-space: nowrap; }
.m-sep { height: 2px; margin: 7px 2px 5px 5px; background: #3f3f3f; }

/* annotations */
.ring { position: absolute; fill: none; stroke-width: 3px; }
.ring-red { left: 0; top: 917px; width: 324px; height: 72px; stroke: #e01b24; }
.ring-yellow { left: 1385px; top: 228px; width: 472px; height: 122px; stroke: #f4e400; }
.ring-purple { left: 1434px; top: 501px; width: 424px; height: 58px; stroke: #9a72f0; }
.note { position: absolute; font-size: 22.600px; line-height: 30px; white-space: nowrap; font-family: "Noto Sans CJK SC", "Noto Sans", sans-serif; }
.note1 { left: 385px; top: 927px; color: #1fa64e; }
.note2 { left: 1898px; top: 257px; color: #5fecc9; }
.note3 { left: 1892px; top: 517px; color: #76e05a; }

.usb { position: absolute; left: 2474px; top: 1063px; width: 76px; height: 76px; }
.watermark { position: absolute; left: 2338px; top: 1487px; font-family: "Liberation Sans", sans-serif; font-size: 20px; line-height: 26px; color: #a3a3a3; white-space: nowrap; }
.corner-icons { position: absolute; left: 2490px; top: 1498px; display: flex; gap: 10px; }
.corner-icons svg { width: 24px; height: 22px; }
```
